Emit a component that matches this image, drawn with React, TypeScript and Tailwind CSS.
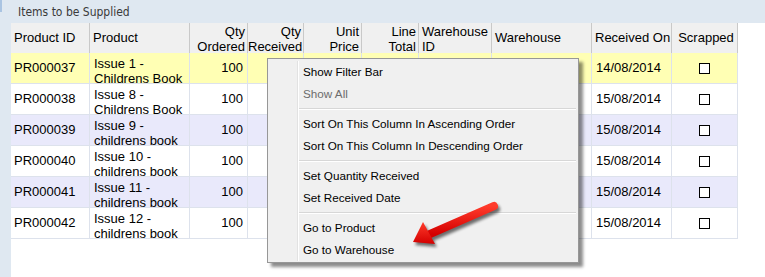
import React from "react";

const cols = [
  { w: "w-[79px]", label: ["Product ID"], align: "left" },
  { w: "w-[100px]", label: ["Product"], align: "left" },
  { w: "w-[58px]", label: ["Qty", "Ordered"], align: "right" },
  { w: "w-[56px]", label: ["Qty", "Received"], align: "right" },
  { w: "w-[58px]", label: ["Unit", "Price"], align: "right" },
  { w: "w-[57px]", label: ["Line", "Total"], align: "right" },
  { w: "w-[73px]", label: ["Warehouse", "ID"], align: "left" },
  { w: "w-[100px]", label: ["Warehouse"], align: "left" },
  { w: "w-[80px]", label: ["Received On"], align: "left" },
  { w: "w-[66px]", label: ["Scrapped"], align: "center" },
];

const rows = [
  { id: "PR000037", p1: "Issue 1 -", p2: "Childrens Book", date: "14/08/2014", bg: "bg-[#ffffb4]" },
  { id: "PR000038", p1: "Issue 8 -", p2: "Childrens Book", date: "15/08/2014", bg: "bg-white" },
  { id: "PR000039", p1: "Issue 9 -", p2: "childrens book", date: "15/08/2014", bg: "bg-[#e9e9fb]" },
  { id: "PR000040", p1: "Issue 10 -", p2: "childrens book", date: "15/08/2014", bg: "bg-white" },
  { id: "PR000041", p1: "Issue 11 -", p2: "childrens book", date: "15/08/2014", bg: "bg-[#e9e9fb]" },
  { id: "PR000042", p1: "Issue 12 -", p2: "childrens book", date: "15/08/2014", bg: "bg-white" },
];

const font = { fontFamily: '"Liberation Sans", Arial, sans-serif' };

function MenuItem({ label, disabled }: { label: string; disabled?: boolean }) {
  return (
    <div className={`h-[22px] flex items-center pl-[4px] text-[11.7px] ${disabled ? "text-[#6d6d6d]" : "text-black"}`}>
      {label}
    </div>
  );
}

function Sep() {
  return (
    <div className="h-[8px] flex flex-col justify-center pr-[2px]">
      <div className="h-px bg-[#d7d7d7]" />
      <div className="h-px bg-white" />
    </div>
  );
}

export default function App() {
  return (
    <div className="relative w-[765px] h-[277px] bg-[#dfe8f1] flex flex-col overflow-hidden" style={font}>
      <div className="absolute left-0 top-0 w-[2px] h-[12px] bg-[#aac4e2]" />
      <div
        className="h-[23px] shrink-0 pl-[18px] pt-[5px] text-[12px] leading-[14px] text-[#3a3a3a]"
        style={{ fontFamily: '"Liberation Sans Narrow", "DejaVu Sans Condensed", "Liberation Sans", sans-serif' }}
      >
        Items to be Supplied
      </div>
      <div className="relative flex-1 ml-[11px] bg-white">
        {/* header */}
        <div className="flex h-[30px] bg-[#f0f0f0] w-[727px] text-[13px] text-black">
          {cols.map((c, i) => (
            <div
              key={i}
              className={`${c.w} shrink-0 border-r border-[#c9c9c9] ${
                c.align === "right" ? "pl-0 pr-[2px]" : "pl-[3px] pr-0"
              } ${c.label.length > 1 ? "pt-[1px] leading-[15px]" : "flex items-center"} ${
                c.align === "right" ? "text-right justify-end" : c.align === "center" ? "text-center justify-center" : "text-left"
              }`}
            >
              {c.label.length > 1 ? (
                <>
                  <div className="whitespace-nowrap">{c.label[0]}</div>
                  <div className="whitespace-nowrap">{c.label[1]}</div>
                </>
              ) : (
                <span className="whitespace-nowrap">{c.label[0]}</span>
              )}
            </div>
          ))}
        </div>
        {/* rows */}
        {rows.map((r, ri) => (
          <div key={ri} className={`flex h-[31px] w-[727px] ${r.bg} border-b border-[#dde2ec] text-[13px] text-black`}>
            <div className="w-[79px] shrink-0 border-r border-[#dde2ec] pl-[3px] flex items-center">{r.id}</div>
            <div className="w-[100px] shrink-0 border-r border-[#dde2ec] pl-[4px] pt-[3px] leading-[15px] overflow-hidden">
              <div className="whitespace-nowrap">{r.p1}</div>
              <div className="whitespace-nowrap">{r.p2}</div>
            </div>
            <div className="w-[58px] shrink-0 border-r border-[#dde2ec] pr-[4px] flex items-center justify-end">100</div>
            <div className="w-[56px] shrink-0 border-r border-[#dde2ec]" />
            <div className="w-[58px] shrink-0 border-r border-[#dde2ec]" />
            <div className="w-[57px] shrink-0 border-r border-[#dde2ec]" />
            <div className="w-[73px] shrink-0 border-r border-[#dde2ec]" />
            <div className="w-[100px] shrink-0 border-r border-[#dde2ec]" />
            <div className="w-[80px] shrink-0 border-r border-[#dde2ec] pl-[4px] flex items-center">{r.date}</div>
            <div className="w-[66px] shrink-0 border-r border-[#dde2ec] flex items-center justify-center">
              <div className="w-[11px] h-[11px] border border-black bg-white" />
            </div>
          </div>
        ))}

        {/* context menu */}
        <div
          className="absolute left-[256px] top-[35px] w-[312px] bg-[#f0f0f0] border border-[#979797] shadow-[4px_4px_3px_rgba(0,0,0,0.45)] flex pt-[2px] pb-[1px]"
          style={font}
        >
          <div className="w-[29px] shrink-0" />
          <div className="flex-1 border-l border-[#e2e2e2]">
            <div className="border-l border-white">
              <MenuItem label="Show Filter Bar" />
              <MenuItem label="Show All" disabled />
              <Sep />
              <MenuItem label="Sort On This Column In Ascending Order" />
              <MenuItem label="Sort On This Column In Descending Order" />
              <Sep />
              <MenuItem label="Set Quantity Received" />
              <MenuItem label="Set Received Date" />
              <Sep />
              <MenuItem label="Go to Product" />
              <MenuItem label="Go to Warehouse" />
            </div>
          </div>
        </div>
      </div>

      {/* red arrow */}
      <svg className="absolute left-0 top-0 pointer-events-none" width="765" height="277" viewBox="0 0 765 277">
        <defs>
          <linearGradient id="rg" x1="0" y1="0" x2="0" y2="1">
            <stop offset="0" stopColor="#ff3b2b" />
            <stop offset="1" stopColor="#d40000" />
          </linearGradient>
          <filter id="blur" x="-20%" y="-20%" width="140%" height="140%">
            <feGaussianBlur stdDeviation="1.8" />
          </filter>
        </defs>
        <g transform="translate(2,3)" filter="url(#blur)" opacity="0.55">
          <line x1="430" y1="234" x2="494" y2="206" stroke="#000" strokeWidth="8" strokeLinecap="round" />
          <polygon points="413,242 423,222 435,244" fill="#000" />
        </g>
        <line x1="430" y1="234" x2="494" y2="206" stroke="url(#rg)" strokeWidth="8" strokeLinecap="round" />
        <polygon points="413,242 423,222 435,244" fill="url(#rg)" />
      </svg>
    </div>
  );
}
